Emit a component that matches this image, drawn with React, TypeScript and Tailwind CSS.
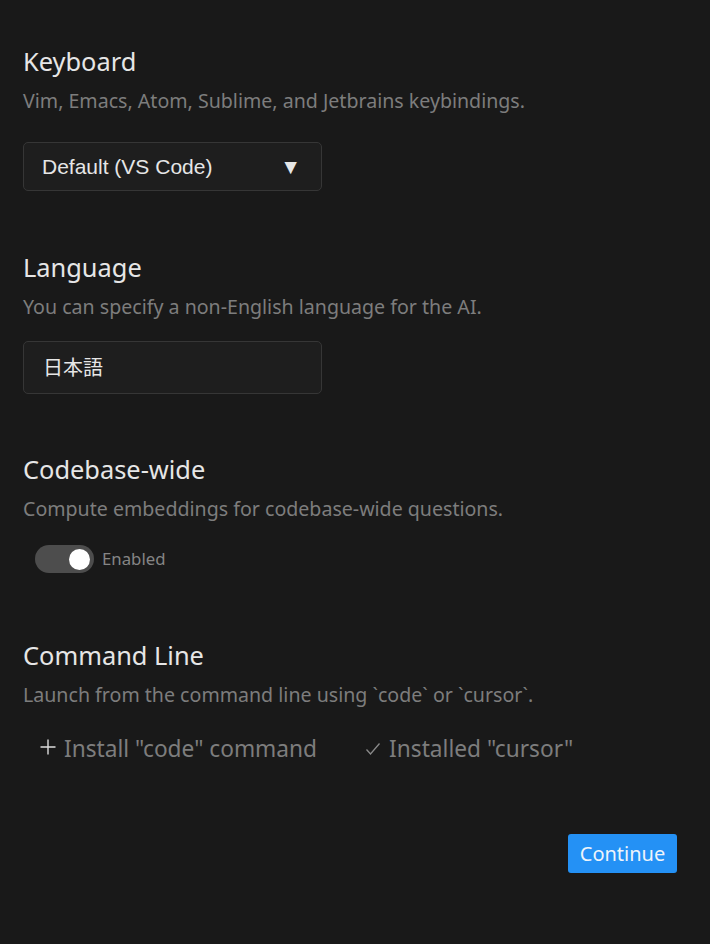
import React from 'react';

const font = { fontFamily: '"Noto Sans", "Noto Sans CJK JP", sans-serif' };

function Section({ title, desc, children }: { title: string; desc: string; children?: React.ReactNode }) {
  return (
    <div>
      <h2 className="text-[25.4px] leading-[32px] text-[#e6e6e6]">{title}</h2>
      <p className="mt-[11px] text-[19.6px] leading-[26px] text-[#7d7d7d]">{desc}</p>
      {children}
    </div>
  );
}

function Plus() {
  return (
    <svg width="16" height="16" viewBox="0 0 16 16" fill="none" className="mr-[8px] -mt-[4px]">
      <path d="M8 0.5 V15.5 M0.5 8 H15.5" stroke="#dcdcdc" strokeWidth="1.4" />
    </svg>
  );
}

function Check() {
  return (
    <svg width="16" height="14" viewBox="0 0 16 14" fill="none" className="mr-[8px]">
      <path d="M1.5 7.5 L5.5 12 L14.5 1.5" stroke="#8a8a8a" strokeWidth="1.3" />
    </svg>
  );
}

export default function App() {
  return (
    <div className="min-h-[944px] w-[710px] bg-[#191919] px-[23px] pt-[45px]" style={font}>
      <Section title="Keyboard" desc="Vim, Emacs, Atom, Sublime, and Jetbrains keybindings.">
        <div
          className="mt-[28px] flex h-[49px] w-[299px] items-center justify-between rounded-[5px] border border-[#363636] bg-[#1e1e1e] pl-[18px] pr-[20px] text-[21px] text-[#e6e6e6]"
          style={{ fontFamily: '"Liberation Sans", Arial, sans-serif' }}
        >
          <span>Default (VS Code)</span>
          <span className="text-[21px]">▼</span>
        </div>
      </Section>

      <div className="mt-[60px]">
        <Section title="Language" desc="You can specify a non-English language for the AI.">
          <div className="mt-[21px] flex h-[53px] w-[299px] items-center rounded-[5px] border border-[#363636] bg-[#1e1e1e] pl-[19px] text-[20px] text-[#e6e6e6]">
            日本語
          </div>
        </Section>
      </div>

      <div className="mt-[59px]">
        <Section title="Codebase-wide" desc="Compute embeddings for codebase-wide questions.">
          <div className="mt-[23px] flex items-center pl-[12px]">
            <div className="flex h-[28px] w-[59px] items-center justify-end rounded-full bg-[#4d4d4d] pr-[4px]">
              <div className="h-[21px] w-[21px] rounded-full bg-white" />
            </div>
            <span className="ml-[8px] text-[16.8px] text-[#858585]">Enabled</span>
          </div>
        </Section>
      </div>

      <div className="mt-[66px]">
        <Section title="Command Line" desc="Launch from the command line using `code` or `cursor`.">
          <div className="mt-[26px] flex h-[30px] items-center pl-[17px] text-[22.7px] text-[#7d7d7d]">
            <span className="flex items-center">
              <Plus />
              Install "code" command
            </span>
            <span className="ml-[48px] flex items-center">
              <Check />
              Installed "cursor"
            </span>
          </div>
        </Section>
      </div>

      <div className="mt-[70px] flex justify-end pr-[10px]">
        <button className="h-[39px] w-[109px] rounded-[3px] bg-[#2491f5] text-[20px] text-[#eef4fb]">Continue</button>
      </div>
    </div>
  );
}
